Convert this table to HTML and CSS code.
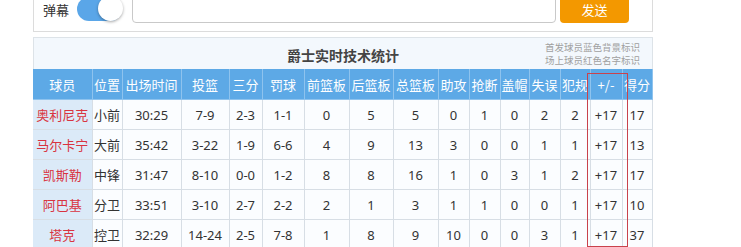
FILE: index.html
```html
<!DOCTYPE html>
<html lang="zh">
<head>
<meta charset="utf-8">
<link rel="stylesheet" href="styles.css">
</head>
<body>
<div class="page">
  <div class="danmu">
    <span class="dm-label">弹幕</span>
    <span class="switch"><span class="knob"></span></span>
    <input class="dm-input" type="text">
    <button class="send">发送</button>
  </div>
  <div class="stats">
    <div class="stats-title">
      <span></span>
      <span class="title">爵士实时技术统计</span>
      <div class="note">首发球员蓝色背景标识<br>场上球员红色名字标识</div>
    </div>
    <table class="box">
      <colgroup>
        <col style="width:59px"><col style="width:30px"><col style="width:59px"><col style="width:48px">
        <col style="width:33px"><col style="width:42px"><col style="width:45px"><col style="width:44px">
        <col style="width:45px"><col style="width:31px"><col style="width:31px"><col style="width:29px">
        <col style="width:31px"><col style="width:30px"><col style="width:32px"><col style="width:30px">
      </colgroup>
      <thead>
        <tr><th>球员</th><th>位置</th><th>出场时间</th><th>投篮</th><th>三分</th><th>罚球</th><th>前篮板</th><th>后篮板</th><th>总篮板</th><th>助攻</th><th>抢断</th><th>盖帽</th><th>失误</th><th>犯规</th><th>+/-</th><th>得分</th></tr>
      </thead>
      <tbody>
        <tr><td class="name">奥利尼克</td><td>小前</td><td>30:25</td><td>7-9</td><td>2-3</td><td>1-1</td><td>0</td><td>5</td><td>5</td><td>0</td><td>1</td><td>0</td><td>2</td><td>2</td><td>+17</td><td>17</td></tr>
        <tr><td class="name">马尔卡宁</td><td>大前</td><td>35:42</td><td>3-22</td><td>1-9</td><td>6-6</td><td>4</td><td>9</td><td>13</td><td>3</td><td>0</td><td>0</td><td>1</td><td>1</td><td>+17</td><td>13</td></tr>
        <tr><td class="name">凯斯勒</td><td>中锋</td><td>31:47</td><td>8-10</td><td>0-0</td><td>1-2</td><td>8</td><td>8</td><td>16</td><td>1</td><td>0</td><td>3</td><td>1</td><td>2</td><td>+17</td><td>17</td></tr>
        <tr><td class="name">阿巴基</td><td>分卫</td><td>33:51</td><td>3-10</td><td>2-7</td><td>2-2</td><td>2</td><td>1</td><td>3</td><td>1</td><td>1</td><td>0</td><td>0</td><td>1</td><td>+17</td><td>10</td></tr>
        <tr><td class="name">塔克</td><td>控卫</td><td>32:29</td><td>14-24</td><td>2-5</td><td>7-8</td><td>1</td><td>8</td><td>9</td><td>10</td><td>0</td><td>0</td><td>3</td><td>1</td><td>+17</td><td>37</td></tr>
      </tbody>
    </table>
    <div class="highlight"></div>
  </div>
</div>
</body>
</html>
```

FILE: styles.css
```css
html, body {
  margin: 0;
  padding: 0;
  background: #fff;
  overflow: hidden;
}
body {
  font-family: "Noto Sans", "Noto Sans CJK SC", sans-serif;
  color: #333;
}
.page {
  width: 620px;
  margin: -10px 0 0 33px;
}
.danmu {
  display: flex;
  align-items: center;
  border: 1px solid #dcdcdc;
  padding: 4px 24px 8px 9px;
  height: 28px;
}
.dm-label {
  flex: none;
  white-space: nowrap;
  font-size: 13px;
  font-family: "Noto Sans CJK SC", sans-serif;
  color: #333;
  margin-right: 8px;
}
.switch {
  position: relative;
  width: 45px;
  height: 24px;
  border-radius: 12px;
  background: #5aa6e8;
  margin-right: 10px;
  flex: none;
}
.knob {
  position: absolute;
  right: -1px;
  top: -1px;
  width: 25px;
  height: 25px;
  border-radius: 50%;
  background: #fff;
  box-shadow: 0 1px 3px rgba(0,0,0,0.35);
}
.dm-input {
  flex: none;
  width: 424px;
  height: 28px;
  box-sizing: border-box;
  border: 1px solid #c9c9c9;
  border-radius: 4px;
  margin: 0 4px 0 0;
  padding: 0 6px;
  outline: none;
}
.send {
  flex: none;
  width: 69px;
  height: 28px;
  border: none;
  border-radius: 4px;
  background: #f39800;
  color: #fff;
  font-size: 13px;
  font-family: "Noto Sans CJK SC", sans-serif;
  padding: 0;
}
.stats {
  position: relative;
  margin-top: 5px;
}
.stats-title {
  display: grid;
  grid-template-columns: 1fr auto 1fr;
  align-items: center;
  height: 31px;
  border: 1px solid #dde3e8;
  border-bottom: none;
  background: #f3f8fd;
}
.title {
  font-family: "Noto Sans CJK SC", sans-serif;
  font-size: 14px;
  font-weight: bold;
  color: #444;
  padding-top: 2px;
}
.note {
  justify-self: end;
  padding-right: 12px;
  font-family: "Noto Sans CJK SC", sans-serif;
  font-size: 9.5px;
  line-height: 12.5px;
  color: #a0a0a0;
  text-align: right;
}
.box {
  width: 619px;
  table-layout: fixed;
  border-collapse: collapse;
  font-size: 13px;
}
.box th, .box td {
  padding: 0;
  text-align: center;
  white-space: nowrap;
  overflow: hidden;
}
.box th {
  height: 30px;
  background: #5da9e6;
  color: #fff;
  font-weight: normal;
  font-family: "Noto Sans CJK SC", sans-serif;
  border: 1px solid #8ec3ee;
  border-top: none;
}
.box td {
  height: 29px;
  background: #fbfdff;
  border: 1px solid #d7dee5;
  color: #333;
}
.box td.name {
  background: #dbeaf8;
  color: #d93340;
  font-family: "Noto Sans CJK SC", sans-serif;
}
.box tr > :first-child {
  border-left: none;
}
.highlight {
  position: absolute;
  left: 554px;
  top: 36px;
  width: 39px;
  height: 172px;
  border: 1.5px solid #c9424c;
  pointer-events: none;
}
```
